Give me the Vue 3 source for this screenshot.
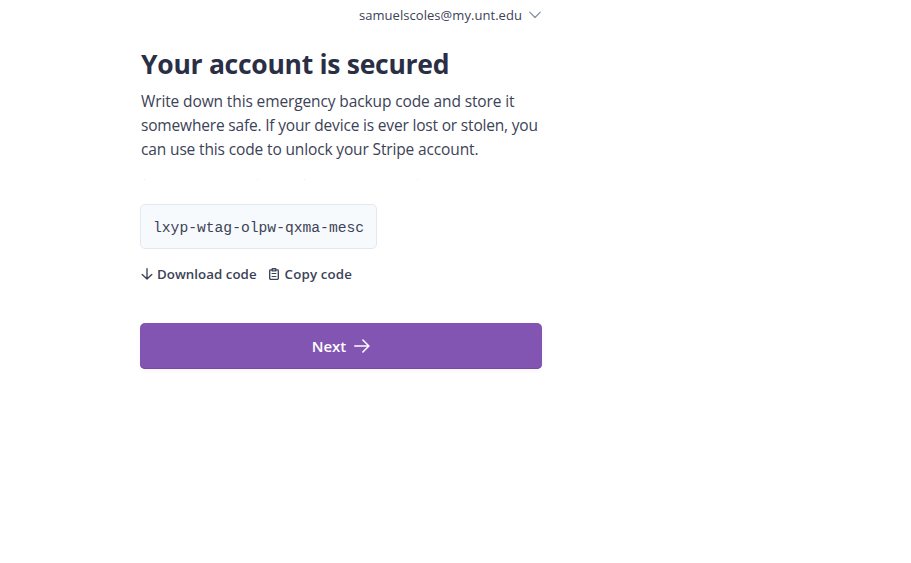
<script setup>
const email = 'samuelscoles@my.unt.edu'
const code = 'lxyp-wtag-olpw-qxma-mesc'
</script>

<template>
  <main class="page">
    <div class="column">
      <header class="account">
        <span class="email">{{ email }}</span>
        <svg class="chevron" width="12" height="8" viewBox="0 0 12 8"><path d="M.7 1.1 6 6.5l5.3-5.4" /></svg>
      </header>
      <h1>Your account is secured</h1>
      <p class="intro">
        <span class="line first">Write down this emergency backup code and store it</span>
        <span class="line second">somewhere safe. If your device is ever lost or stolen, you</span>
        <span class="line third">can use this code to unlock your Stripe account.</span>
      </p>
      <svg class="specks" width="402" height="42" viewBox="0 0 402 42"><path d="M4 17.5h1M117 17.5h1M164 17.5h1M277 17.5h1" /></svg>
      <div class="code">{{ code }}</div>
      <div class="actions">
        <button class="link download">
          <svg width="12" height="12" viewBox="0 0 12 12"><path d="M6 .7v10.4M1.2 6.4 6 11.1l4.8-4.7" /></svg>
          <span>Download code</span>
        </button>
        <button class="link copy">
          <svg width="10" height="12" viewBox="0 0 10 12"><path d="M2.6 1.9H1.5q-.8 0-.8.8v7.8q0 .8.8.8h7q.8 0 .8-.8V2.7q0-.8-.8-.8H7.4M3.2 1.1q0-.4.4-.4h2.8q.4 0 .4.4v1.8H3.2z" /><path class="rule" d="M3 5.5h4M3 8.5h4" /></svg>
          <span>Copy code</span>
        </button>
      </div>
      <button class="next">
        <span>Next</span>
        <svg width="16" height="14" viewBox="0 0 16 14"><path d="M.8 7h14M8.9 1l6 6-6 6" /></svg>
      </button>
    </div>
  </main>
</template>

<style>
body { background: #fff; }
</style>

<style scoped>
.page {
  box-sizing: border-box;
  height: 563px;
  padding-left: 140px;
  font-family: "Open Sans", "Noto Sans", sans-serif;
  color: #3c4257;
  overflow: hidden;
}
.column { width: 402px; }
svg {
  display: block;
  flex: none;
  fill: none;
  stroke: currentColor;
  stroke-linecap: round;
  stroke-linejoin: round;
}
.account {
  display: flex;
  height: 30px;
  align-items: center;
  justify-content: flex-end;
  gap: 7px;
  padding-right: 1px;
  font-size: 13px;
}
.email { letter-spacing: 0.05px; }
.chevron { color: #8792a2; stroke-width: 1.3; }
h1 {
  margin: 16px 0 0 1px;
  font-size: 26.5px;
  line-height: 36px;
  font-weight: 700;
  letter-spacing: -0.28px;
  color: #2a2f45;
  white-space: nowrap;
}
.intro { margin: 7px 0 0 1px; font-size: 15.5px; line-height: 24px; font-weight: 380; }
.line { display: block; width: max-content; white-space: nowrap; }
.first { letter-spacing: -0.12px; }
.second { letter-spacing: -0.18px; }
.third { letter-spacing: -0.14px; }
.specks { margin-top: 1px; stroke: #e9ebef; stroke-width: 1; stroke-linecap: butt; }
.code {
  box-sizing: border-box;
  width: 237px;
  height: 45px;
  padding: 1px 0 0 12px;
  border: 1px solid #e3e8ee;
  border-radius: 5px;
  background: #f7fafc;
  font: 14.67px/44px "Liberation Mono", monospace;
  white-space: nowrap;
}
.actions { display: flex; gap: 12px; height: 20px; margin: 15px 0 0 1px; }
button { border: 0; padding: 0; background: none; font-family: inherit; color: inherit; white-space: nowrap; }
.link { display: flex; align-items: center; gap: 4px; font-size: 13.3px; line-height: 20px; font-weight: 600; }
.download { letter-spacing: 0.04px; }
.copy { gap: 6px; letter-spacing: 0.15px; }
.link svg { stroke-width: 1.35; }
.link .rule { stroke-width: 1; }
.next {
  display: flex;
  align-items: center;
  justify-content: center;
  gap: 8px;
  width: 402px;
  height: 46px;
  margin-top: 39px;
  border-radius: 5px;
  background: #8255b3;
  box-shadow: inset 0 -1px #7549a5, 0 2px 5px rgba(60, 66, 87, .06);
  color: #fff;
  font-size: 15px;
  font-weight: 600;
}
.next svg { stroke-width: 1.6; }
</style>
